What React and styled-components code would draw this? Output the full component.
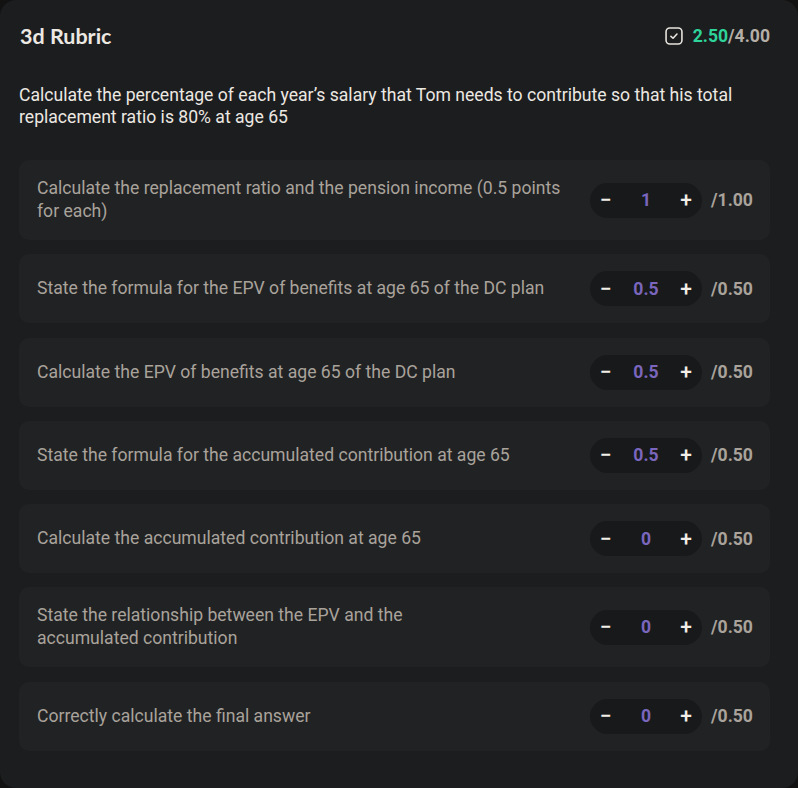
import styled, { createGlobalStyle } from "styled-components";

const Global = createGlobalStyle`
  html, body { margin: 0; padding: 0; background: #121212; }
  * { box-sizing: border-box; }
`;

const Card = styled.div`
  width: 798px;
  min-height: 788px;
  background: #1c1d1f;
  border-radius: 16px;
  padding: 22px 28px 30px 19px;
  font-family: Roboto, "Liberation Sans", sans-serif;
  color: #ece8e2;
`;

const Header = styled.div`
  display: flex;
  align-items: center;
  justify-content: space-between;
  height: 28px;
  padding-left: 1px;
`;

const Title = styled.div`
  font-family: Lato, "Open Sans", sans-serif;
  font-weight: 700;
  font-size: 21.5px;
  color: #ece8e2;
`;

const Score = styled.div`
  display: flex;
  align-items: center;
  gap: 10px;
  font-weight: 700;
  font-size: 17.6px;
  color: #b5afa7;
  .got { color: #2ed39a; }
`;

const Question = styled.p`
  margin: 34px 0 32px;
  font-size: 17.6px;
  line-height: 22px;
  color: #ece8e2;
`;

const List = styled.div`
  display: flex;
  flex-direction: column;
  gap: 14.3px;
`;

const Row = styled.div`
  display: flex;
  align-items: center;
  justify-content: space-between;
  gap: 24px;
  background: #212224;
  border-radius: 10px;
  padding: 17px 17px 17px 18px;
  min-height: 69px;
  width: 751px;
`;

const Criterion = styled.div`
  flex: 1;
  font-size: 17.6px;
  line-height: 23px;
  color: #a9a39b;
  max-width: ${(p) => (p.$narrow ? "420px" : "none")};
`;

const Controls = styled.div`
  display: flex;
  align-items: center;
  gap: 9px;
  flex-shrink: 0;
`;

const Stepper = styled.div`
  display: flex;
  align-items: center;
  justify-content: space-between;
  width: 112px;
  height: 35px;
  border-radius: 18px;
  background: #18191a;
  padding: 0 6px;
`;

const StepBtn = styled.button`
  width: 20px;
  height: 24px;
  border: 0;
  background: none;
  color: #f2eee8;
  font-family: Roboto, sans-serif;
  font-size: 21px;
  font-weight: 500;
  line-height: 24px;
  padding: 0;
  cursor: pointer;
  display: flex;
  align-items: center;
  justify-content: center;
`;

const Value = styled.span`
  font-size: 17.6px;
  font-weight: 700;
  color: #7a66bd;
`;

const Max = styled.span`
  font-size: 17.6px;
  font-weight: 700;
  color: #a9a39b;
  width: 42px;
`;

const CheckIcon = () => (
  <svg width="18" height="18" viewBox="0 0 17 17" fill="none">
    <rect x="1" y="1" width="15" height="15" rx="3.5" stroke="#e8e4de" strokeWidth="1.5" />
    <path d="M5.6 8.8 L7.6 10.6 L11.3 6.6" stroke="#e8e4de" strokeWidth="1.5" strokeLinecap="round" strokeLinejoin="round" />
  </svg>
);

const items = [
  { text: "Calculate the replacement ratio and the pension income (0.5 points for each)", value: "1", max: "1.00" },
  { text: "State the formula for the EPV of benefits at age 65 of the DC plan", value: "0.5", max: "0.50" },
  { text: "Calculate the EPV of benefits at age 65 of the DC plan", value: "0.5", max: "0.50" },
  { text: "State the formula for the accumulated contribution at age 65", value: "0.5", max: "0.50" },
  { text: "Calculate the accumulated contribution at age 65", value: "0", max: "0.50" },
  { text: "State the relationship between the EPV and the accumulated contribution", value: "0", max: "0.50", narrow: true },
  { text: "Correctly calculate the final answer", value: "0", max: "0.50" },
];

export default function App() {
  return (
    <>
      <Global />
      <Card>
        <Header>
          <Title>3d Rubric</Title>
          <Score>
            <CheckIcon />
            <span><span className="got">2.50</span>/4.00</span>
          </Score>
        </Header>
        <Question>
          Calculate the percentage of each year’s salary that Tom needs to contribute so that his total replacement ratio is 80% at age 65
        </Question>
        <List>
          {items.map((it) => (
            <Row key={it.text}>
              <Criterion $narrow={it.narrow}>{it.text}</Criterion>
              <Controls>
                <Stepper>
                  <StepBtn>−</StepBtn>
                  <Value>{it.value}</Value>
                  <StepBtn>+</StepBtn>
                </Stepper>
                <Max>/{it.max}</Max>
              </Controls>
            </Row>
          ))}
        </List>
      </Card>
    </>
  );
}
